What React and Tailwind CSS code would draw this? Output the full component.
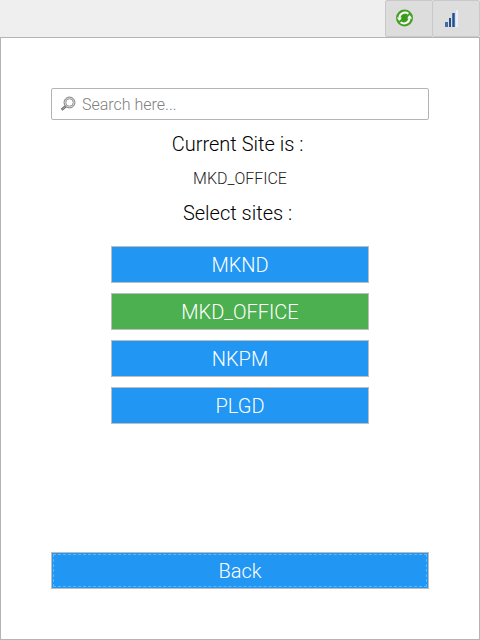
import React from 'react';

const SITES = ['MKND', 'MKD_OFFICE', 'NKPM', 'PLGD'];
const CURRENT_SITE = 'MKD_OFFICE';

function RefreshIcon() {
  return (
    <svg width="18" height="18" viewBox="0 0 18 18" aria-hidden="true">
      <circle cx="8.5" cy="9" r="8.5" fill="#43a022" />
      <path d="M3.4 8.6C3.8 4.4 8.6 2 12.4 4.8" fill="none" stroke="#fff" strokeWidth="2" />
      <path d="M13.6 9.4C13.2 13.6 8.4 16 4.6 13.2" fill="none" stroke="#fff" strokeWidth="2" />
      <path d="M0.8 8.6h5.4L3.4 12z" fill="#fff" />
      <path d="M16.2 9.4h-5.4L13.6 6z" fill="#fff" />
      <circle cx="8.5" cy="9" r="3" fill="#3a9a20" />
    </svg>
  );
}

function SignalIcon() {
  return (
    <svg width="18" height="18" viewBox="0 0 18 18" aria-hidden="true">
      <path d="M2 13h3v5H2z" fill="#3f6ba5" />
      <path d="M6 9h2v9H6z" fill="#23508f" />
      <path d="M9 4h3v14H9z" fill="#4a74ab" />
      <path d="M10 4h1v14h-1z" fill="#23508f" />
      <path d="M13 1h2v17h-2z" fill="#e8f0fa" />
    </svg>
  );
}

function SearchIcon() {
  return (
    <svg
      className="absolute left-2 top-2"
      width="18"
      height="16"
      viewBox="0 0 18 16"
      fill="none"
      aria-hidden="true"
    >
      <path d="M7 10L2.6 13.8" stroke="#6b6b6b" strokeWidth="2.6" />
      <path d="M6.6 10.4L3.2 13.2" stroke="#c4c4c4" strokeWidth="0.8" />
      <circle cx="10.5" cy="6.5" r="5.4" fill="#fff" stroke="#6b6b6b" strokeWidth="1" />
      <circle cx="10.5" cy="6.5" r="4.5" stroke="#c4c4c4" strokeWidth="0.8" />
      <circle cx="10.5" cy="6.5" r="3.7" stroke="#808080" strokeWidth="0.8" />
    </svg>
  );
}

function ToolButton({ label, children }) {
  return (
    <button
      type="button"
      aria-label={label}
      className="flex h-full w-12 items-center rounded-xs border border-[#c8c8c8] bg-[#dddddd] pb-0.5 pl-[10px]"
    >
      {children}
    </button>
  );
}

export default function App() {
  return (
    <div className="flex min-h-screen flex-col bg-white font-['Roboto',sans-serif] font-light text-black">
      <header className="flex h-[37px] justify-end -space-x-px bg-[#efefef]">
        <ToolButton label="Refresh">
          <RefreshIcon />
        </ToolButton>
        <ToolButton label="Signal">
          <SignalIcon />
        </ToolButton>
      </header>

      <main className="flex flex-1 flex-col border border-[#b4b4b4] px-[50px] pt-[50px] pb-[50px]">
        <label className="relative block">
          <SearchIcon />
          <input
            type="text"
            aria-label="Search"
            placeholder="Search here..."
            className="block h-8 w-full rounded-xs border border-[#b4b4b4] pl-[30px] pr-2 text-base placeholder:text-[#808080] focus:outline-none"
          />
        </label>

        <div className="mt-3 text-center">
          <p className="whitespace-pre text-xl leading-6">{'Current Site is :\u00a0'}</p>
          <p className="mt-[11px] mb-[10px] text-base leading-6 text-[#222222]">{CURRENT_SITE}</p>
          <p className="whitespace-pre text-xl leading-6">{'Select sites :\u00a0'}</p>
        </div>

        <div className="mx-[60px] mt-[21px] flex flex-col gap-[10px]">
          {SITES.map((site) => (
            <button
              key={site}
              type="button"
              className={`h-[37px] border border-[#bdbdbd] text-xl text-white ${
                site === CURRENT_SITE ? 'bg-[#4caf50]' : 'bg-[#2196f3]'
              }`}
            >
              {site}
            </button>
          ))}
        </div>

        <button
          type="button"
          className="mt-auto h-[37px] border border-[#bdbdbd] bg-[#2196f3] p-px text-xl text-white"
        >
          <span className="flex h-full items-center justify-center border border-dashed border-[#64b5f6]">Back</span>
        </button>
      </main>
    </div>
  );
}
